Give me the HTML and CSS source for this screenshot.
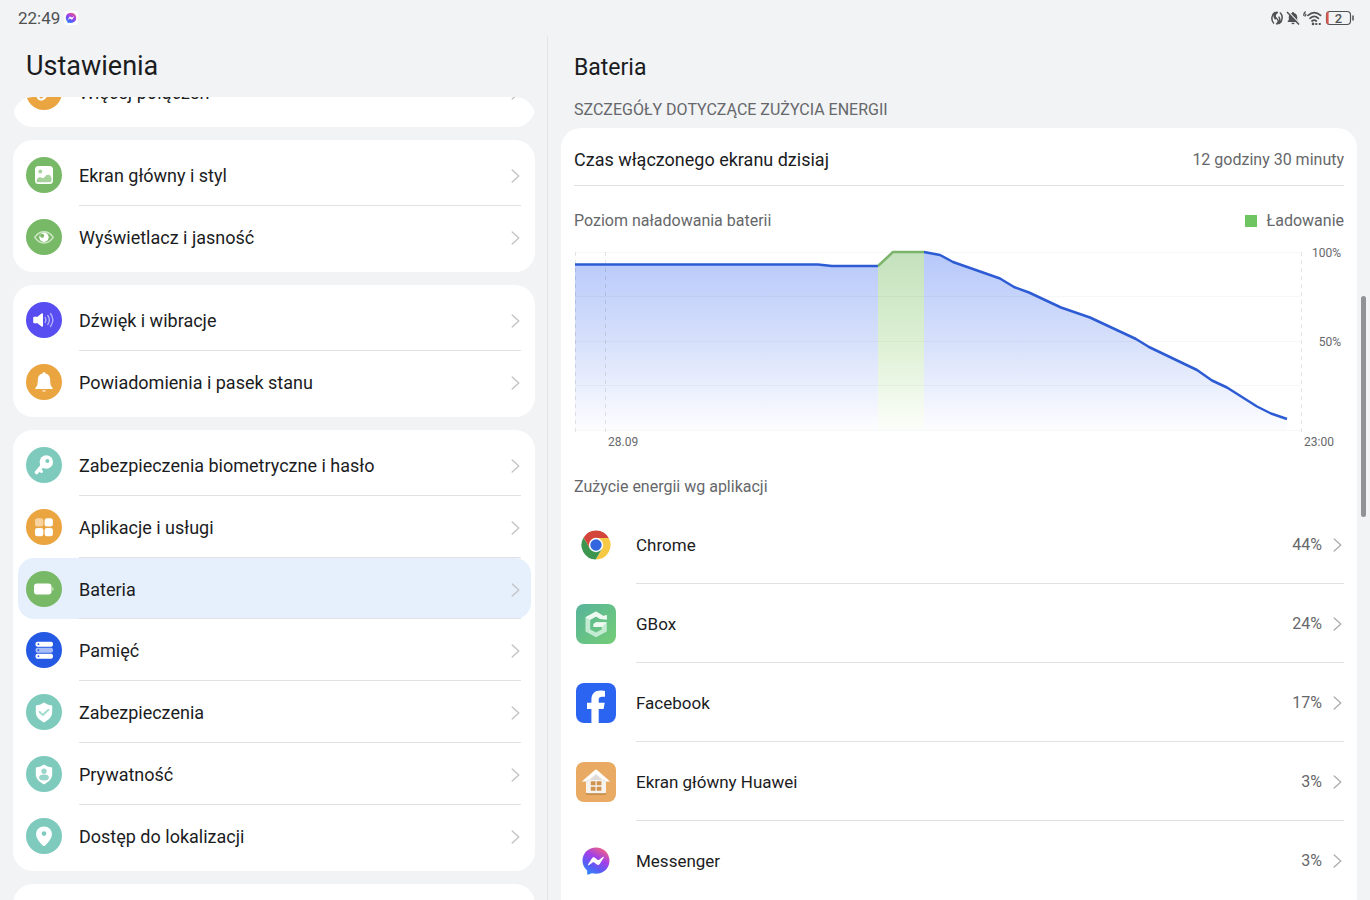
FILE: index.html
```html
<!DOCTYPE html>
<html lang="pl">
<head>
<meta charset="utf-8">
<meta name="viewport" content="width=device-width, initial-scale=1">
<title>Ustawienia – Bateria</title>
<link rel="stylesheet" href="styles.css">
</head>
<body>
<svg class="defs" aria-hidden="true">
  <defs>
    <linearGradient id="msg" x1="0.2" y1="1" x2="0.75" y2="0">
      <stop offset="0" stop-color="#2a8cff"/><stop offset="0.3" stop-color="#5a5cf5"/><stop offset="0.62" stop-color="#a33fe8"/><stop offset="1" stop-color="#f2637e"/>
    </linearGradient>
    <symbol id="chevron" viewBox="0 0 9 14"><path d="M1.2 1 7.8 7 1.2 13" fill="none" stroke="currentColor" stroke-width="1.4" stroke-linecap="round" stroke-linejoin="round"/></symbol>
    <symbol id="messenger" viewBox="0 0 28 28">
      <path d="M14 0.5C6.3 0.5.5 6.2.5 13.6c0 3.900 1.500 7.100 4.200 9.500.3.300.5.700.5 1.100v2.600c0 .700.700 1.100 1.300.8l2.700-1.200c.3-.1.6-.1.9-.1 1.200.3 2.500.5 3.900.5 7.700 0 13.500-5.700 13.500-13.200S21.700.5 14 .5z" fill="url(#msg)"/>
      <path d="M6 17.500 10 11.200c.6-1 2-1.200 2.900-.5l2.900 2.200c.3.200.7.200 1 0l4-3c.6-.4 1.300.2.900.8l-4 6.300c-.6 1-2 1.200-2.900.5l-2.900-2.200c-.3-.2-.7-.2-1 0l-4 3c-.6.400-1.300-.2-.9-.8z" fill="#fff"/>
    </symbol>
  </defs>
</svg>

<header class="status">
  <div class="status-side">
    <time>22:49</time>
    <svg class="status-app" viewBox="0 0 14 14" role="img" aria-label="Messenger"><rect width="14" height="14" rx="3" fill="#fff"/><use href="#messenger" x="1.500" y="1.500" width="11" height="11"/></svg>
  </div>
  <div class="status-side status-icons">
    <svg width="12" height="14" viewBox="0 0 12 14" fill="none" stroke="#505153" stroke-width="1.500" stroke-linecap="round" aria-hidden="true">
      <path d="M3.600 1.600C0 4 .2 9.500 2.600 12M6.400 1.400C3.400 3.500 3.600 6 5.600 7.500S8 11 5.600 12.800M5.400 1.200C3 3 2.600 5.500 4.200 7.800M8 6.200C9.400 8.500 9 11 6.600 12.800M9.400 2C12 4.500 11.800 10 8.400 12.400"/>
    </svg>
    <svg width="14" height="14" viewBox="0 0 14 14" aria-hidden="true">
      <path d="M7 1c.6 0 1 .4 1 1 2 .5 3.200 2 3.200 4v2.800L12.600 11H1.400l1.400-2.200V6C2.800 4 4 2.500 6 2c0-.6.4-1 1-1zM5.400 11.700h3.200a1.600 1.600 0 0 1-3.200 0z" fill="#505153"/>
      <path d="M2 .4 14 13" stroke="#f1f3f5" stroke-width="1.400"/><path d="M1 1 13 13.500" stroke="#505153" stroke-width="1.500"/>
    </svg>
    <svg width="19" height="15" viewBox="0 0 19 15" fill="none" stroke="#505153" stroke-linecap="round" aria-hidden="true">
      <path d="M2.400.8C1.200 1.600.7 2.600.7 3.900a1.100 1.100 0 1 0 1.100-1.100" stroke-width="1.100"/>
      <path d="M5 4.400c4-3.500 8.600-3.500 12.600 0M7 7.300c2.700-2.400 5.800-2.400 8.400 0M9 10c1.400-1.200 2.900-1.200 4.300 0" stroke-width="1.700"/>
      <circle cx="10" cy="12.900" r="1.300" fill="#505153" stroke="none"/><path d="M13 13h.5M16.500 13h.5" stroke-width="2"/>
    </svg>
    <svg width="30" height="16" viewBox="0 0 30 16" role="img" aria-label="Bateria 2%">
      <rect x="1.500" y="1.500" width="24" height="13" rx="3.500" fill="none" stroke="#505153" stroke-width="1.200"/>
      <path d="M3.600 1.300C2 1.600 1.200 3 1.200 5v6c0 2 .8 3.400 2.400 3.700z" fill="#d9574f"/>
      <path d="M28 6v4" stroke="#505153" stroke-width="1.500" stroke-linecap="round"/>
      <text x="13.500" y="12.500" class="status-level">2</text>
    </svg>
  </div>
</header>

<main class="panes">
  <nav class="sidebar" aria-label="Ustawienia">
    <h1 class="sidebar-title">Ustawienia</h1>
    <div class="menu-view">
      <div class="menu">
        <ul class="group">
          <li><a class="item" href="#polaczenia"><svg class="item-icon orange" viewBox="0 0 36 36"><g fill="none" stroke="#fff" stroke-width="2.400" stroke-linecap="round"><path d="M16 16l-3.300 3.300a3.600 3.600 0 0 0 5.100 5.100l3.600-3.600"/><path d="M20 18.500l3.300-3.300a3.600 3.600 0 0 0-5.100-5.100l-3.600 3.600"/></g></svg><span class="item-body">Więcej połączeń<svg class="chevron"><use href="#chevron"/></svg></span></a></li>
        </ul>
        <ul class="group">
          <li><a class="item" href="#ekran"><svg class="item-icon green" viewBox="0 0 36 36"><rect x="9" y="9" width="18" height="18" rx="3.500" fill="#fff"/><circle cx="14.300" cy="14.500" r="1.900" fill="#a5d298"/><path d="M10.500 24.500c0-2.500 1.600-4.300 3.500-4.300 1.600 0 2 .9 3 .9 1.600 0 2.400-3.300 5-3.300 2.300 0 3.500 1.900 3.500 4.200v1.300c0 1.200-.8 2-2 2H12c-1 0-1.500-.3-1.500-.8z" fill="#a5d298"/></svg><span class="item-body">Ekran główny i styl<svg class="chevron"><use href="#chevron"/></svg></span></a></li>
          <li><a class="item" href="#wyswietlacz"><svg class="item-icon green" viewBox="0 0 36 36"><path d="M8.800 18.300c2.500-3.700 5.600-5.600 9.200-5.600s6.700 1.900 9.200 5.600c-2.500 3.700-5.600 5.600-9.200 5.600s-6.700-1.900-9.200-5.600z" fill="none" stroke="#cfe8c8" stroke-width="1.500" stroke-linejoin="round"/><circle cx="18" cy="18.300" r="4.700" fill="#fff"/><circle cx="16.100" cy="16.700" r="2" fill="#78b967"/></svg><span class="item-body">Wyświetlacz i jasność<svg class="chevron"><use href="#chevron"/></svg></span></a></li>
        </ul>
        <ul class="group">
          <li><a class="item" href="#dzwiek"><svg class="item-icon violet" viewBox="0 0 36 36"><path d="M8.500 14.700h3l4-3.200c.7-.5 1.500-.1 1.500.7v11.600c0 .8-.8 1.200-1.500.7l-4-3.200h-3c-.8 0-1.300-.5-1.300-1.300v-4c0-.8.5-1.300 1.300-1.300z" fill="#fff"/><g fill="none" stroke="#b4affa" stroke-width="1.400" stroke-linecap="round"><path d="M19.200 15.600c1 1.500 1 3.300 0 4.800"/><path d="M21.800 13.500c2 2.800 2 6.200 0 9"/><path d="M24.500 11.500c2.900 4 2.900 9 0 13"/></g></svg><span class="item-body">Dźwięk i wibracje<svg class="chevron"><use href="#chevron"/></svg></span></a></li>
          <li><a class="item" href="#powiadomienia"><svg class="item-icon orange" viewBox="0 0 36 36"><path d="M18 8.300c.8 0 1.400.5 1.600 1.300 2.900.8 4.600 3 4.600 6.100 0 4.600.7 6.600 2.300 8 .6.600.3 1.400-.5 1.400H10c-.8 0-1.100-.8-.5-1.400 1.600-1.400 2.300-3.400 2.300-8 0-3.100 1.700-5.300 4.600-6.100.2-.8.800-1.300 1.600-1.300z" fill="#fff"/><path d="M15.800 26.200h4.400a2.300 2.300 0 0 1-4.400 0z" fill="#fbe3c1"/></svg><span class="item-body">Powiadomienia i pasek stanu<svg class="chevron"><use href="#chevron"/></svg></span></a></li>
        </ul>
        <ul class="group">
          <li><a class="item" href="#biometria"><svg class="item-icon teal" viewBox="0 0 36 36"><path d="M16.500 18.500 10.500 25.500" stroke="#fff" stroke-width="3.600" stroke-linecap="round"/><path d="m13.500 22.500 2 2" stroke="#fff" stroke-width="3" stroke-linecap="round"/><circle cx="20.300" cy="15" r="6.700" fill="#fff"/><circle cx="21.400" cy="14" r="2" fill="#7ecbbd"/></svg><span class="item-body">Zabezpieczenia biometryczne i hasło<svg class="chevron"><use href="#chevron"/></svg></span></a></li>
          <li><a class="item" href="#aplikacje"><svg class="item-icon orange" viewBox="0 0 36 36" fill="#fff"><rect x="9" y="9.300" width="8.300" height="8.300" rx="2.300" fill="#f8d3a0"/><rect x="18.600" y="9.300" width="8.300" height="8.300" rx="2.300"/><rect x="9" y="18.900" width="8.300" height="8.300" rx="2.300"/><rect x="18.600" y="18.900" width="8.300" height="8.300" rx="2.300"/></svg><span class="item-body">Aplikacje i usługi<svg class="chevron"><use href="#chevron"/></svg></span></a></li>
          <li><a class="item item-current" href="#bateria" aria-current="page"><svg class="item-icon green" viewBox="0 0 36 36"><rect x="8" y="12.500" width="17.500" height="11" rx="3" fill="#fff"/><path d="M26.300 16c.9.300 1.300 1 1.300 2s-.4 1.700-1.300 2z" fill="#cfe8c8"/></svg><span class="item-body">Bateria<svg class="chevron"><use href="#chevron"/></svg></span></a></li>
          <li><a class="item" href="#pamiec"><svg class="item-icon blue" viewBox="0 0 36 36"><rect x="9.500" y="9.700" width="17.500" height="5" rx="2" fill="#fff"/><rect x="9.500" y="15.700" width="17.500" height="5" rx="2" fill="#a6bdf7"/><rect x="9.500" y="21.700" width="17.500" height="5" rx="2" fill="#fff"/><g fill="#2459e4"><circle cx="12.400" cy="12.200" r="0.900"/><circle cx="12.400" cy="18.200" r="0.900"/><circle cx="12.400" cy="24.200" r="0.900"/></g></svg><span class="item-body">Pamięć<svg class="chevron"><use href="#chevron"/></svg></span></a></li>
          <li><a class="item" href="#zabezpieczenia"><svg class="item-icon teal" viewBox="0 0 36 36"><path d="M18 8.400c2.600 1.700 4.800 2.500 7.200 2.800.7.100 1 .5 1 1.100v5.500c0 4.700-2.500 7.500-7.200 10.100-.7.400-1.300.4-2 0-4.700-2.600-7.200-5.400-7.200-10.100v-5.500c0-.6.300-1 1-1.100 2.400-.3 4.600-1.100 7.200-2.800z" fill="#fff"/><path d="m13.700 18 3.200 3 5.600-5.200" fill="none" stroke="#a5dbd1" stroke-width="1.900" stroke-linecap="round" stroke-linejoin="round"/></svg><span class="item-body">Zabezpieczenia<svg class="chevron"><use href="#chevron"/></svg></span></a></li>
          <li><a class="item" href="#prywatnosc"><svg class="item-icon teal" viewBox="0 0 36 36"><path d="M18 8.400c2.600 1.700 4.800 2.500 7.200 2.800.7.100 1 .5 1 1.100v5.500c0 4.700-2.500 7.500-7.200 10.100-.7.400-1.300.4-2 0-4.700-2.600-7.200-5.400-7.200-10.100v-5.500c0-.6.300-1 1-1.100 2.400-.3 4.600-1.100 7.200-2.800z" fill="#fff"/><circle cx="18" cy="15.200" r="2.600" fill="#98d5ca"/><ellipse cx="18" cy="21.500" rx="4.900" ry="3" fill="#98d5ca"/></svg><span class="item-body">Prywatność<svg class="chevron"><use href="#chevron"/></svg></span></a></li>
          <li><a class="item" href="#lokalizacja"><svg class="item-icon teal" viewBox="0 0 36 36"><path d="M18 8.500c4.500 0 7.900 3.200 7.900 7.600 0 4.200-3.100 8.200-6.700 11.400-.8.700-1.600.7-2.400 0-3.600-3.200-6.700-7.200-6.700-11.400 0-4.400 3.400-7.600 7.900-7.600z" fill="#fff"/><circle cx="18" cy="15.600" r="2.300" fill="#7ecbbd"/></svg><span class="item-body">Dostęp do lokalizacji<svg class="chevron"><use href="#chevron"/></svg></span></a></li>
        </ul>
        <div class="group group-next"></div>
      </div>
    </div>
  </nav>

  <section class="detail">
    <h2 class="detail-title">Bateria</h2>
    <h3 class="section-label">SZCZEGÓŁY DOTYCZĄCE ZUŻYCIA ENERGII</h3>
    <div class="card">
      <div class="screen-time"><span>Czas włączonego ekranu dzisiaj</span><span class="screen-time-value">12 godziny 30 minuty</span></div>
      <div class="chart-head"><span>Poziom naładowania baterii</span><span class="legend">Ładowanie</span></div>
      <div class="chart">
        <svg class="plot" viewBox="0 0 728 188" preserveAspectRatio="none" role="img" aria-label="Poziom naładowania baterii">
          <defs>
            <linearGradient id="use" gradientUnits="userSpaceOnUse" x1="0" y1="4" x2="0" y2="182"><stop offset="0" stop-color="#b6c8fa"/><stop offset="0.500" stop-color="#d6e0fb"/><stop offset="1" stop-color="#fdfdff"/></linearGradient>
            <linearGradient id="charge" gradientUnits="userSpaceOnUse" x1="0" y1="4" x2="0" y2="182"><stop offset="0" stop-color="#c4e1bd"/><stop offset="0.500" stop-color="#dcf0d3"/><stop offset="1" stop-color="#fcfefa"/></linearGradient>
          </defs>
          <path d="M1 182V16.500H244L258 18H304V182zM350 182V4L366 7 379 14 426 30.500 440 39 455 44.500 487 59.500 516 69.500 562 91 575 99 623 122 638 132.500 653 139.500 668 149 683 158.500 697 165.500 713 171V182z" fill="url(#use)"/>
          <path d="M304 182V18L319 4H350V182z" fill="url(#charge)"/>
          <path class="grid" d="M1 4.500H727M1 48.500H727M1 93.500H727M1 137.500H727M1 182.500H727"/>
          <path class="ticks" d="M1.500 4V188M31.500 4V188M727.500 4V188"/>
          <path class="line" d="M1 16.500H244L258 18H304"/>
          <path class="line" d="M350 4 366 7 379 14 426 30.500 440 39 455 44.500 487 59.500 516 69.500 562 91 575 99 623 122 638 132.500 653 139.500 668 149 683 158.500 697 165.500 713 171"/>
          <path class="line line-charge" d="M304 18 319 4H350"/>
        </svg>
        <div class="levels"><span>100%</span><span>50%</span></div>
        <div class="dates"><span>28.09</span><span>23:00</span></div>
      </div>
      <h4 class="apps-title">Zużycie energii wg aplikacji</h4>
      <ul class="apps">
        <li><a class="app" href="#chrome"><svg class="app-icon" viewBox="0 0 40 40"><path d="M20 20V13H32.700A14.500 14.500 0 0 1 19.710 34.500L26.060 23.500z" fill="#f6c944"/><path d="M20 20V13H32.700A14.500 14.500 0 0 1 19.710 34.500L26.060 23.500z" fill="#3d9650" transform="rotate(120 20 20)"/><path d="M20 20V13H32.700A14.500 14.500 0 0 1 19.710 34.500L26.060 23.500z" fill="#d3443a" transform="rotate(240 20 20)"/><circle cx="20" cy="20" r="7.200" fill="#fff"/><circle cx="20" cy="20" r="5.700" fill="#3367e0"/></svg><span class="app-body">Chrome<span class="share">44%<svg class="chevron"><use href="#chevron"/></svg></span></span></a></li>
        <li><a class="app" href="#gbox"><svg class="app-icon" viewBox="0 0 40 40"><defs><linearGradient id="gb" x1="0" y1="0" x2="1" y2="1"><stop offset="0" stop-color="#57b49a"/><stop offset="1" stop-color="#74cd76"/></linearGradient></defs><rect width="40" height="40" rx="8" fill="url(#gb)"/><path d="M20 7.500 9.500 13.200V27.500L20 33.200 30.800 27.500V18.200H20L17.500 20V23H25.800V25.400L20 28.600 14.200 25.400V15.800L20 12.400 24.200 15 30.800 15.400V11L27.500 12z" fill="#c3ebd2"/><path d="M20 7.500 9.500 13.200 14.200 15.800 20 12.400 24.200 15 30.800 15.400V11L27.500 12zM20 18.200 17.500 20V23H25.800L30.800 18.200z" fill="#eefaf1"/></svg><span class="app-body">GBox<span class="share">24%<svg class="chevron"><use href="#chevron"/></svg></span></span></a></li>
        <li><a class="app" href="#facebook"><svg class="app-icon" viewBox="0 0 40 40"><rect width="40" height="40" rx="8" fill="#2c64f2"/><path d="M15.400 40V26H11v-6.300h4.400v-2.600c0-6.300 3.300-9.500 9.300-9.500 1.700 0 3.300.2 4.300.5v5.700h-2.700c-2.700 0-3.600 1-3.600 3.400v2.500h6L27.600 26h-4.900v14z" fill="#fff"/></svg><span class="app-body">Facebook<span class="share">17%<svg class="chevron"><use href="#chevron"/></svg></span></span></a></li>
        <li><a class="app" href="#huawei"><svg class="app-icon" viewBox="0 0 40 40"><rect width="40" height="40" rx="8" fill="#e9aa64"/><path d="M10 20.500V31.500c0 .8.500 1.300 1.300 1.300H28.700c.8 0 1.300-.5 1.300-1.300V20.500z" fill="#bd8443"/><path d="M10 17.500V30c0 .8.500 1.300 1.300 1.300H28.700c.8 0 1.300-.5 1.300-1.300V17.500L20 10z" fill="#f7f4f0"/><path d="M10.500 20.500 20 12.500 29.500 20.500V18H10.500z" fill="#dedbd8"/><path d="M5.800 19.600 19 8.100c.6-.5 1.400-.5 2 0L34.200 19.600H29.800L20 11.500 10.200 19.600z" fill="#fff"/><path d="M14.800 19.300h4.700v4h-4.700zM20.700 19.300h4.700v4h-4.700zM14.800 24.700h4.700v4h-4.700zM20.700 24.700h4.700v4h-4.700z" fill="#cf924f"/></svg><span class="app-body">Ekran główny Huawei<span class="share">3%<svg class="chevron"><use href="#chevron"/></svg></span></span></a></li>
        <li><a class="app" href="#messenger-app"><svg class="app-icon" viewBox="0 0 40 40"><use href="#messenger" x="6" y="6" width="28" height="28"/></svg><span class="app-body">Messenger<span class="share">3%<svg class="chevron"><use href="#chevron"/></svg></span></span></a></li>
      </ul>
    </div>
    <div class="scroll-thumb" aria-hidden="true"></div>
  </section>
</main>
</body>
</html>
```
FILE: styles.css
```css
* { box-sizing: border-box; }

body {
  margin: 0;
  height: 100vh;
  overflow: hidden;
  display: flex;
  flex-direction: column;
  background: #f1f3f5;
  color: #1b1c1e;
  font: 400 18px/24px Roboto, "Noto Sans", sans-serif;
}

h1, h2, h3, h4 { margin: 0; font-weight: 400; }
ul { margin: 0; padding: 0; list-style: none; }
a { color: inherit; text-decoration: none; }
svg { display: block; flex: none; }
.defs { position: absolute; width: 0; height: 0; }

/* status bar */
.status {
  flex: none;
  height: 36px;
  padding: 0 15px 0 18px;
  display: flex;
  justify-content: space-between;
  align-items: center;
  color: #505153;
  font-size: 17px;
}
.status-side { display: flex; align-items: center; gap: 4px; }
.status-icons { gap: 3px; }
.status-app { width: 14px; height: 14px; }
.status-level { font-size: 13px; font-weight: 500; text-anchor: middle; fill: #505153; }

.panes {
  flex: 1;
  min-height: 0;
  display: grid;
  grid-template-columns: 2fr 3fr;
}

/* left pane */
.sidebar {
  min-width: 0;
  min-height: 0;
  display: flex;
  flex-direction: column;
  padding: 0 12px 0 13px;
  border-right: 1px solid #e2e4e6;
}
.sidebar-title { padding: 13px 13px 14px; font-size: 27px; line-height: 34px; }
.menu-view { flex: 1; min-height: 0; overflow: hidden; border-radius: 20px 20px 0 0; }
.menu { display: flex; flex-direction: column; gap: 13px; margin-top: -40px; }
.group { padding: 4px 4px 4px 5px; border-radius: 20px; background: #fff; }
.group-next { height: 70px; }
.item {
  display: flex;
  align-items: center;
  gap: 17px;
  height: 62px;
  padding: 0 10px 0 8px;
}
.item-current { height: 61px; border-radius: 16px; background: #e6f0fc; }
.item-icon { width: 36px; height: 36px; border-radius: 50%; }
.item-body {
  flex: 1;
  align-self: stretch;
  display: flex;
  align-items: center;
  justify-content: space-between;
  padding: 3px 1px 0 0;
  border-bottom: 1px solid #e0e1e3;
}
li:last-child > .item > .item-body { border-bottom-color: transparent; }
.chevron { width: 9px; height: 14px; color: #c3c4c6; }

.orange { background: #eaa440; }
.green { background: #78b967; }
.violet { background: #574df0; }
.teal { background: #7ecbbd; }
.blue { background: #2459e4; }

/* right pane */
.detail {
  position: relative;
  min-width: 0;
  min-height: 0;
  display: flex;
  flex-direction: column;
  padding: 0 13px;
}
.detail-title { padding: 18px 13px 0; font-size: 23px; line-height: 28px; }
.section-label { padding: 16px 13px 6px; font-size: 16px; line-height: 24px; color: #66676a; }
.card {
  flex: 1;
  min-height: 0;
  overflow: hidden;
  padding: 0 13px;
  border-radius: 20px 20px 0 0;
  background: #fff;
}
.screen-time {
  display: flex;
  justify-content: space-between;
  align-items: center;
  height: 58px;
  padding-top: 6px;
  border-bottom: 1px solid #e0e1e3;
}
.screen-time-value, .share { font-size: 16px; color: #66676a; }
.chart-head {
  display: flex;
  justify-content: space-between;
  padding: 23px 0 15px;
  font-size: 16px;
  color: #66676a;
}
.legend { display: flex; align-items: center; gap: 10px; }
.legend::before { content: ""; width: 12px; height: 12px; background: #6fc562; }

.chart {
  display: grid;
  grid-template-columns: 1fr 42px;
  grid-template-rows: 186px 16px;
  color: #66676a;
  font-size: 12px;
  line-height: 16px;
}
.plot { width: 100%; height: 188px; }
.plot path { vector-effect: non-scaling-stroke; }
.grid { fill: none; stroke: #000; stroke-opacity: 0.03; }
.ticks { fill: none; stroke: #000; stroke-opacity: 0.1; stroke-dasharray: 4 4; }
.line { fill: none; stroke: #2c5bd4; stroke-width: 2.5; stroke-linejoin: round; }
.line-charge { stroke: #7cb46c; }
.levels {
  display: flex;
  flex-direction: column;
  gap: 73px;
  margin-top: -3px;
  padding-right: 3px;
  text-align: right;
}
.dates { grid-column: 1 / -1; display: flex; justify-content: space-between; padding: 0 10px 0 34px; }

.apps-title { padding: 25px 0 6px; font-size: 16px; line-height: 24px; color: #66676a; }
.app { display: flex; align-items: center; gap: 20px; height: 79px; padding-left: 2px; }
.app-icon { width: 40px; height: 40px; }
.app-body {
  flex: 1;
  align-self: stretch;
  display: flex;
  align-items: center;
  justify-content: space-between;
  padding: 1px 2px 0 0;
  border-bottom: 1px solid #e0e1e3;
  font-size: 17px;
}
li:last-child > .app > .app-body { border-bottom-color: transparent; }
.share { display: flex; align-items: center; gap: 11px; }
.share .chevron { color: #aeafb1; }

.scroll-thumb {
  position: absolute;
  top: 260px;
  right: 4px;
  width: 5px;
  height: 221px;
  border-radius: 3px;
  background: #909295;
}
```
